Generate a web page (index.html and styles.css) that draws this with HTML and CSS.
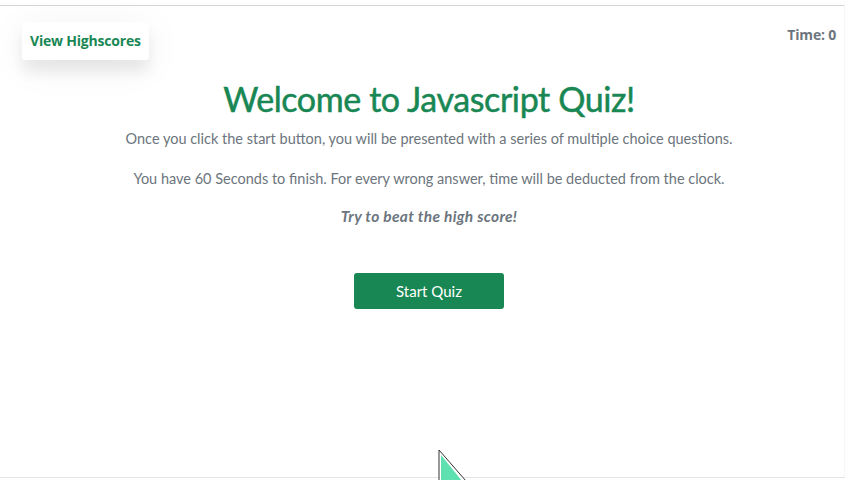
FILE: index.html
```html
<!DOCTYPE html>
<html>
<head>
<meta charset="utf-8">
<link rel="stylesheet" href="styles.css">
</head>
<body>
<div class="frame">
  <header class="top">
    <a class="highscores">View Highscores</a>
    <div class="timer">Time: 0</div>
  </header>
  <main class="intro">
    <h1 class="title">Welcome to Javascript Quiz!</h1>
    <p class="lead">Once you click the start button, you will be presented with a series of multiple choice questions.</p>
    <p class="lead">You have 60 Seconds to finish. For every wrong answer, time will be deducted from the clock.</p>
    <p class="lead emph">Try to beat the high score!</p>
    <button class="start">Start Quiz</button>
  </main>
  <svg class="cursor" width="40" height="32" viewBox="0 0 40 32">
    <path d="M1 1 L1 32 L28 32 Z" fill="#fff" stroke="#333" stroke-width="1"/>
    <path d="M3 6 L3 32 L24 32 Z" fill="#5fe0b0"/>
  </svg>
</div>
</body>
</html>
```
FILE: styles.css
```css
html, body {
  margin: 0;
  padding: 0;
  background: #fff;
}
body {
  font-family: "Open Sans", "Noto Sans", sans-serif;
  width: 853px;
  height: 480px;
  overflow: hidden;
}
.frame {
  position: relative;
  margin-top: 5px;
  width: 845px;
  height: 473px;
  border-top: 1px solid #d6d6d6;
  border-right: 1px solid #f6f6f6;
  border-bottom: 1px solid #e4e4e4;
  box-sizing: border-box;
}
.top {
  display: flex;
  justify-content: space-between;
  align-items: flex-start;
  padding: 16px 8px 0 22px;
}
.highscores {
  display: block;
  background: #fff;
  color: #198754;
  font-weight: 700;
  font-size: 14px;
  padding: 9px 8px 10px 8px;
  border-radius: 3px;
  box-shadow: 0 12px 14px rgba(0,0,0,0.07), 0 6px 40px rgba(0,0,0,0.06);
  letter-spacing: -0.2px;
}
.timer {
  color: #6c757d;
  font-weight: 700;
  font-size: 14px;
  padding-top: 3px;
  letter-spacing: -0.2px;
}
.intro {
  display: flex;
  flex-direction: column;
  align-items: center;
  margin-top: 18px;
  padding-left: 14px;
  font-family: "Lato", "Open Sans", sans-serif;
}
.title {
  margin: 0 0 8px 0;
  color: #198754;
  font-weight: 400;
  font-size: 34px;
  line-height: 42px;
  letter-spacing: -0.4px;
  -webkit-text-stroke: 0.5px #198754;
}
.lead {
  margin: 0 0 18px 0;
  color: #6c757d;
  font-size: 14.5px;
  line-height: 22px;
}
.emph {
  font-style: italic;
  font-weight: 700;
  font-size: 15.5px;
  letter-spacing: 0.3px;
  margin-top: -3px;
  margin-bottom: 0;
}
.start {
  margin-top: 46px;
  width: 150px;
  height: 36px;
  border: none;
  border-radius: 3px;
  background: #198754;
  color: #fff;
  font-family: inherit;
  font-size: 15px;
}
.cursor {
  position: absolute;
  left: 438px;
  top: 443px;
}
```
